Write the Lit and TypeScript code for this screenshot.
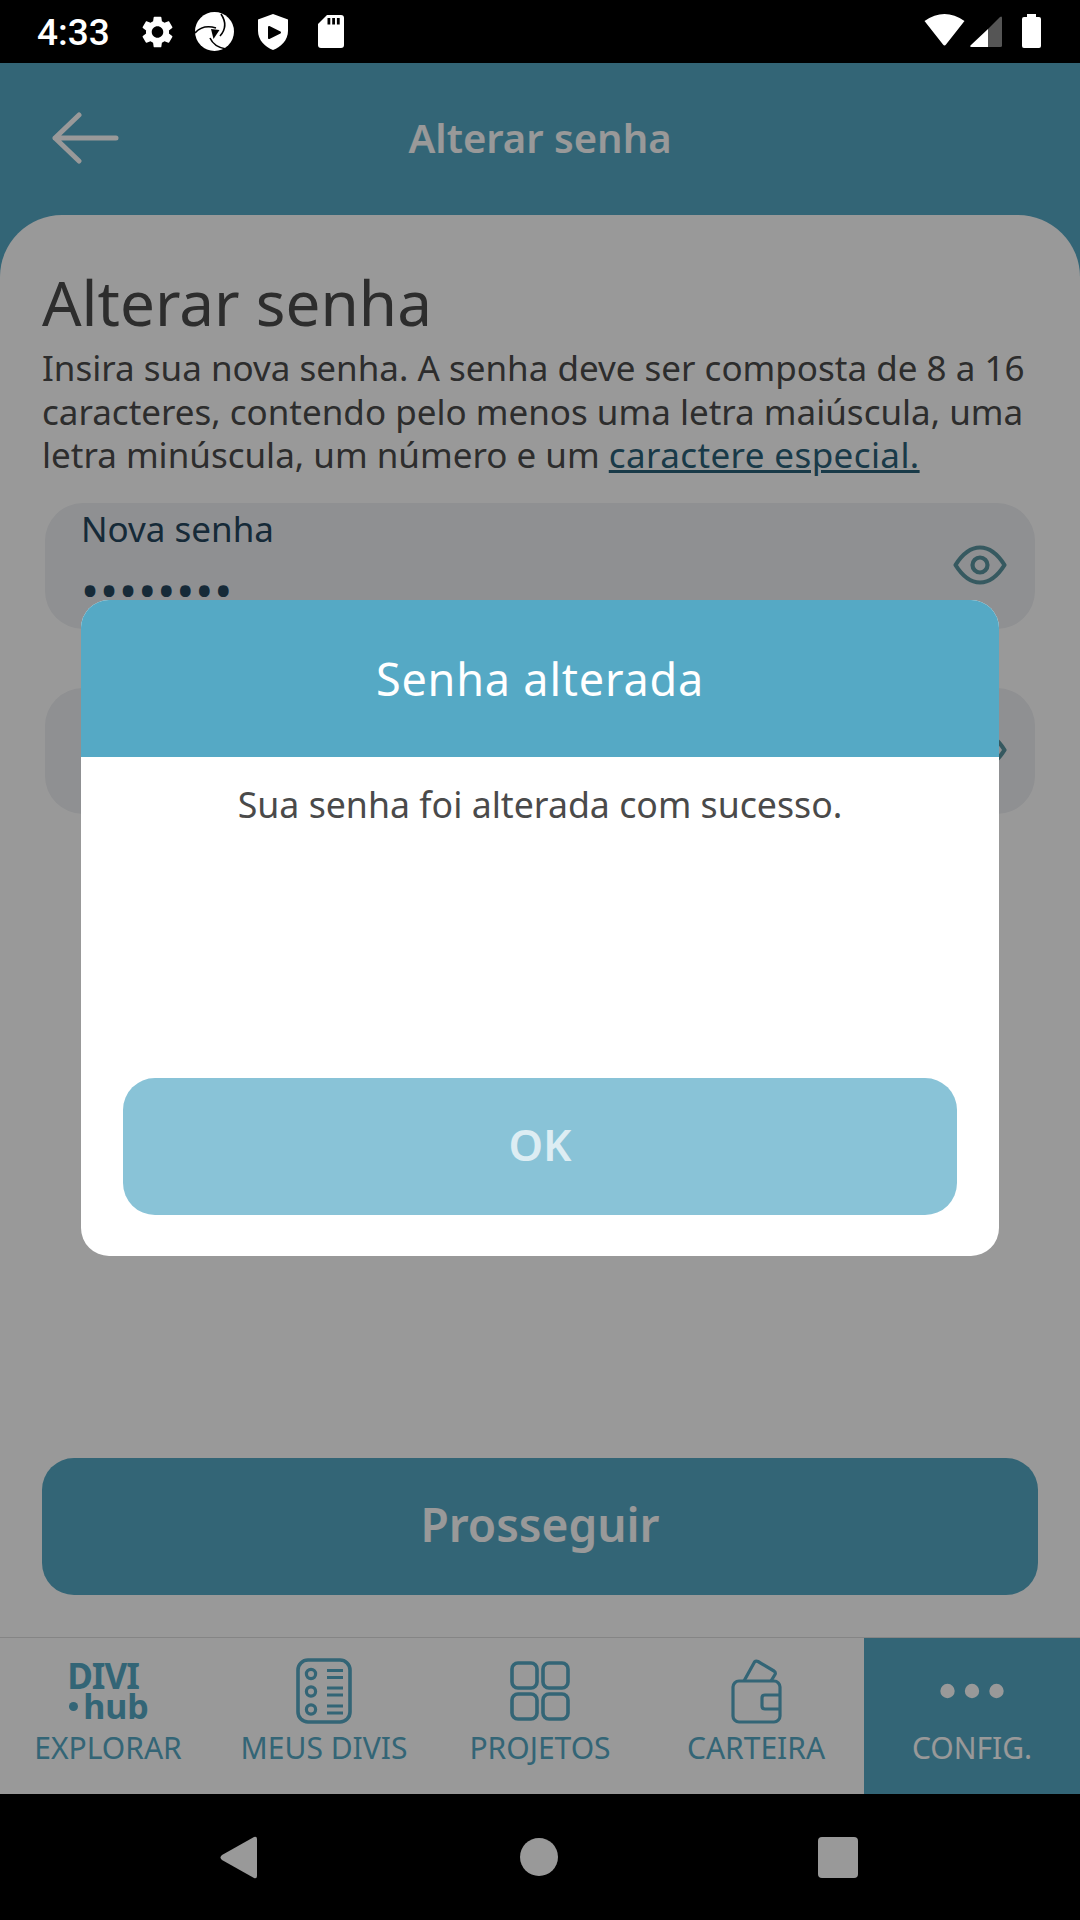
import { LitElement, css, html } from "lit";
import { customElement } from "lit/decorators.js";

const eyeIcon = html`<svg class="eye" viewBox="0 0 54 40" fill="none" stroke="#5a95a0" stroke-width="4.2">
  <path d="M2.5 20 C10 8 18 2.5 27 2.5 C36 2.5 44 8 51.5 20 C44 32 36 37.5 27 37.5 C18 37.5 10 32 2.5 20 Z" stroke-linejoin="round" />
  <circle cx="27" cy="20" r="7.5" />
</svg>`;

const tabs = [
  {
    label: "EXPLORAR",
    icon: html`<div class="logo"><span class="logo-top">DIVI</span><span class="logo-bottom"><i></i>hub</span></div>`,
  },
  {
    label: "MEUS DIVIS",
    icon: html`<svg class="ic-list" viewBox="0 0 56 66" fill="none" stroke="#55a9c5">
      <rect x="2" y="2" width="52" height="62" rx="10" stroke-width="3.6" />
      <g stroke-width="3.2">
        <circle cx="15" cy="16" r="4.6" />
        <circle cx="15" cy="33.5" r="4.6" />
        <circle cx="15" cy="51.5" r="4.6" />
        <path d="M31 12.5H47M31 19.5H47M31 30H47M31 37H47M31 48H47M31 55H47" />
      </g>
    </svg>`,
  },
  {
    label: "PROJETOS",
    icon: html`<svg class="ic-grid" viewBox="0 0 60 60" fill="none" stroke="#55a9c5" stroke-width="3.6">
      <rect x="2" y="2" width="25" height="25" rx="6" />
      <rect x="33" y="2" width="25" height="25" rx="6" />
      <rect x="2" y="33" width="25" height="25" rx="6" />
      <rect x="33" y="33" width="25" height="25" rx="6" />
    </svg>`,
  },
  {
    label: "CARTEIRA",
    icon: html`<svg class="ic-wallet" viewBox="0 0 51 65" fill="none" stroke="#55a9c5" stroke-width="3.2" stroke-linejoin="round">
      <rect x="2" y="22" width="47" height="41" rx="6" />
      <path d="M13 22 L23.5 3 Q25 1.5 27 2.5 L43 12 Q45 13.5 44 15.5 L40 22" />
      <path d="M49 36 H34 Q31 36 31 39 V47 Q31 50 34 50 H49" />
    </svg>`,
  },
  {
    label: "CONFIG.",
    active: true,
    icon: html`<svg class="ic-dots" viewBox="0 0 64 16" fill="#fff">
      <circle cx="7.5" cy="8" r="7.2" />
      <circle cx="32" cy="8" r="7.2" />
      <circle cx="56.5" cy="8" r="7.2" />
    </svg>`,
  },
];

@customElement("app-root")
export class AppRoot extends LitElement {
  static styles = css`
    :host {
      display: block;
      position: relative;
      width: 1080px;
      height: 1920px;
      overflow: hidden;
      font-family: "Noto Sans", "Open Sans", sans-serif;
      background: #000;
    }

    .app {
      display: flex;
      flex-direction: column;
      height: 100%;
    }

    /* status bar stays on top of the scrim */
    .status {
      flex: 0 0 63px;
      position: relative;
      z-index: 2;
      background: #000;
      display: flex;
      align-items: flex-start;
      color: #fff;
    }

    .time {
      margin: 13px 0 0 37px;
      font: 500 37px/40px Roboto, sans-serif;
      width: 71px;
      white-space: nowrap;
    }

    .status svg {
      display: block;
      flex: none;
    }

    .gear { width: 31px; height: 32px; margin: 16px 0 0 34px; }
    .aperture { width: 39px; height: 39px; margin: 12px 0 0 22px; }
    .shield { width: 30px; height: 36px; margin: 14px 0 0 24px; }
    .sd { width: 26px; height: 33px; margin: 15px 0 0 30px; }
    .wifi { width: 41px; height: 32px; margin: 14px 0 0 auto; }
    .signal { width: 32px; height: 31px; margin: 16px 0 0 5px; }
    .battery { width: 19px; height: 34px; margin: 14px 39px 0 20px; }

    .screen {
      flex: 1;
      display: flex;
      flex-direction: column;
      background: #55a9c5;
      min-height: 0;
    }

    .topbar {
      flex: 0 0 152px;
      box-sizing: border-box;
      padding-bottom: 3px;
      display: flex;
      align-items: center;
      justify-content: center;
      position: relative;
      color: #fff;
      font-size: 40px;
      font-weight: 600;
    }

    .back {
      position: absolute;
      left: 52px;
      top: 49px;
      width: 67px;
      height: 52px;
    }

    .sheet {
      flex: 1;
      display: flex;
      flex-direction: column;
      background: #fff;
      border-radius: 62px 62px 0 0;
      padding: 52px 42px 42px;
      color: #4b4b4b;
    }

    .sheet h1 {
      margin: 0;
      font-size: 62px;
      font-weight: 400;
      line-height: 70px;
    }

    .sheet p {
      margin: 9px 0 0;
      font-size: 35px;
      line-height: 43.5px;
    }

    .sheet a {
      color: #2b6179;
      text-decoration: underline;
      letter-spacing: 0.4px;
    }

    .field {
      position: relative;
      box-sizing: border-box;
      height: 126px;
      margin: 0 3px;
      padding: 4px 36px;
      background: #eef0f3;
      border-radius: 38px;
      color: #25465e;
      font-size: 35px;
      line-height: 44px;
    }

    .field + .field {
      margin-top: 59px;
    }

    .form {
      margin-top: 26.5px;
    }

    .dots {
      font-size: 48px;
      letter-spacing: 1px;
      line-height: 30px;
      margin-top: 24px;
      white-space: nowrap;
    }

    .eye {
      position: absolute;
      right: 28px;
      top: 42px;
      width: 54px;
      height: 40px;
    }

    .primary {
      margin-top: auto;
      height: 137px;
      box-sizing: border-box;
      padding-bottom: 5px;
      display: flex;
      align-items: center;
      justify-content: center;
      background: #55a9c5;
      border-radius: 32px;
      color: #fff;
      font-size: 46px;
      font-weight: 600;
    }

    .tabs {
      flex: 0 0 157px;
      display: flex;
      box-sizing: border-box;
      background: #fff;
      border-top: 1px solid #dedede;
    }

    .tab {
      flex: 1;
      display: flex;
      flex-direction: column;
      align-items: center;
      color: #55a9c5;
      font-size: 30px;
    }

    .tab.active {
      background: #55a9c5;
      color: #fff;
    }

    .tab-icon {
      height: 74px;
      margin-top: 16px;
      display: flex;
      align-items: center;
      justify-content: center;
    }

    .tab-label {
      line-height: 40px;
      white-space: nowrap;
    }

    .logo {
      display: flex;
      flex-direction: column;
      font-weight: 700;
      line-height: 30px;
      color: #55a9c5;
    }

    .logo-top {
      font-size: 35px;
      letter-spacing: -1px;
    }

    .logo-bottom {
      display: flex;
      align-items: center;
      gap: 5px;
      margin-left: 2px;
      font-size: 34px;
    }

    .logo-bottom i {
      width: 9px;
      height: 9px;
      border-radius: 50%;
      background: currentColor;
    }

    .ic-list { width: 56px; height: 66px; }
    .ic-grid { width: 60px; height: 60px; }
    .ic-wallet { width: 51px; height: 65px; }
    .ic-dots { width: 64px; height: 16px; }

    .navbar {
      flex: 0 0 126px;
      box-sizing: border-box;
      padding-right: 3px;
      background: #000;
      position: relative;
      display: flex;
      align-items: center;
      justify-content: center;
    }

    .navbar svg {
      display: block;
      flex: none;
    }

    .nav-back { width: 38px; height: 43px; margin-right: 262px; }
    .nav-home { width: 38px; height: 38px; }
    .nav-recent { width: 40px; height: 41px; margin-left: 260px; }

    /* dim layer over everything below the status bar */
    .scrim {
      position: absolute;
      left: 0;
      right: 0;
      top: 63px;
      bottom: 0;
      z-index: 1;
      background: rgba(0, 0, 0, 0.4);
      padding-top: 537px;
      box-sizing: border-box;
    }

    .dialog {
      width: 918px;
      height: 656px;
      margin: 0 auto;
      display: flex;
      flex-direction: column;
      background: #fff;
      border-radius: 28px;
      overflow: hidden;
      box-sizing: border-box;
    }

    .dialog-head {
      flex: 0 0 157px;
      display: flex;
      align-items: center;
      justify-content: center;
      background: #55a9c5;
      color: #fff;
      font-size: 45px;
      letter-spacing: 0.8px;
    }

    .dialog-msg {
      margin-top: 25px;
      text-align: center;
      color: #4a4a4a;
      font-size: 35.7px;
      line-height: 44px;
    }

    .ok {
      margin: auto 42px 41px;
      height: 137px;
      box-sizing: border-box;
      padding-bottom: 5px;
      display: flex;
      align-items: center;
      justify-content: center;
      background: #89c3d7;
      border-radius: 32px;
      color: #ddedf3;
      font-size: 44px;
      font-weight: 600;
    }
  `;

  private renderStatus() {
    return html`<div class="status">
      <span class="time">4:33</span>
      <svg class="gear" viewBox="2.6 2 18.8 20" fill="#fff">
        <path d="M19.14 12.94c.04-.3.06-.61.06-.94 0-.32-.02-.64-.07-.94l2.03-1.58c.18-.14.23-.41.12-.61l-1.92-3.32c-.12-.22-.37-.29-.59-.22l-2.39.96c-.5-.38-1.03-.7-1.62-.94l-.36-2.54c-.04-.24-.24-.41-.48-.41h-3.84c-.24 0-.43.17-.47.41l-.36 2.54c-.59.24-1.13.57-1.62.94l-2.39-.96c-.22-.08-.47 0-.59.22L2.74 8.87c-.12.21-.08.47.12.61l2.03 1.58c-.05.3-.09.63-.09.94s.02.64.07.94l-2.03 1.58c-.18.14-.23.41-.12.61l1.92 3.32c.12.22.37.29.59.22l2.39-.96c.5.38 1.03.7 1.62.94l.36 2.54c.05.24.24.41.48.41h3.84c.24 0 .44-.17.47-.41l.36-2.54c.59-.24 1.13-.56 1.62-.94l2.39.96c.22.08.47 0 .59-.22l1.92-3.32c.12-.22.07-.47-.12-.61l-2.01-1.58zM12 15.6c-1.98 0-3.6-1.62-3.6-3.6s1.62-3.6 3.6-3.6 3.6 1.62 3.6 3.6-1.62 3.6-3.6 3.6z" />
      </svg>
      <svg class="aperture" viewBox="0 0 39 39">
        <circle cx="19.5" cy="19.5" r="19.5" fill="#fff" />
        <g fill="none" stroke="#000" stroke-width="1.6">
          <path d="M0 21 Q8 12 21 16" />
          <path d="M26 2 Q34 14 25 24" />
          <path d="M31 37 Q19 35 15 26" />
        </g>
        <path d="M16 17 L24.5 18 L18.5 27 Z" fill="#000" />
      </svg>
      <svg class="shield" viewBox="0 0 30 36">
        <path d="M15 0 L30 5.5 V17 C30 26 23 33 15 36 C7 33 0 26 0 17 V5.5 Z" fill="#fff" />
        <path d="M11 13 L22 18.5 L11 24 Z" fill="#000" stroke="#000" stroke-width="2" stroke-linejoin="round" />
      </svg>
      <svg class="sd" viewBox="0 0 26 33">
        <path d="M9 0 H23 a3 3 0 0 1 3 3 V30 a3 3 0 0 1 -3 3 H3 a3 3 0 0 1 -3 -3 V9 Z" fill="#fff" />
        <path d="M9.5 3 h2.8 v6.5 h-2.8z M14.2 3 h2.8 v6.5 h-2.8z M18.9 3 h2.8 v6.5 h-2.8z" fill="#000" />
      </svg>
      <svg class="wifi" viewBox="0 0 41 32">
        <path d="M0.5 7 Q20.5 -7 40.5 7 L22 30.5 Q20.5 32.5 19 30.5 Z" fill="#fff" />
      </svg>
      <svg class="signal" viewBox="0 0 32 31">
        <path d="M18 13 L30 1 Q32 -0.5 32 2 V29.5 Q32 31 30.5 31 H18 Z" fill="#555" />
        <path d="M18 13 V31 H1.5 Q-0.5 31 0.5 29.5 Z" fill="#fff" />
      </svg>
      <svg class="battery" viewBox="0 0 19 34">
        <path d="M5 0 H14 V3 H17 Q19 3 19 5 V32 Q19 34 17 34 H2 Q0 34 0 32 V5 Q0 3 2 3 H5 Z" fill="#fff" />
      </svg>
    </div>`;
  }

  private renderTabs() {
    return html`<nav class="tabs">
      ${tabs.map(
        (t) => html`<div class="tab ${t.active ? "active" : ""}">
          <div class="tab-icon">${t.icon}</div>
          <div class="tab-label">${t.label}</div>
        </div>`
      )}
    </nav>`;
  }

  render() {
    return html`<div class="app">
        ${this.renderStatus()}
        <div class="screen">
          <header class="topbar">
            <svg class="back" viewBox="0 0 67 52" fill="none" stroke="#fff" stroke-width="5" stroke-linecap="round" stroke-linejoin="round">
              <path d="M64 26 H3 M27 3 L3 26 L27 49" />
            </svg>
            Alterar senha
          </header>
          <main class="sheet">
            <h1>Alterar senha</h1>
            <p>
              Insira sua nova senha. A senha deve ser composta de 8 a 16 caracteres, contendo pelo menos uma letra
              maiúscula, uma letra minúscula, um número e um <a>caractere especial.</a>
            </p>
            <div class="form">
              <div class="field">
                <div>Nova senha</div>
                <div class="dots">••••••••</div>
                ${eyeIcon}
              </div>
              <div class="field">${eyeIcon}</div>
            </div>
            <div class="primary">Prosseguir</div>
          </main>
          ${this.renderTabs()}
        </div>
        <div class="navbar">
          <svg class="nav-back" viewBox="0 0 38 43">
            <path d="M2 19 L34 1 Q37 0 37 3 V40 Q37 43 34 42 L2 24 Q-1 21.5 2 19 Z" fill="#fff" />
          </svg>
          <svg class="nav-home" viewBox="0 0 38 38"><circle cx="19" cy="19" r="19" fill="#fff" /></svg>
          <svg class="nav-recent" viewBox="0 0 40 41"><rect width="40" height="41" rx="4" fill="#fff" /></svg>
        </div>
      </div>
      <div class="scrim">
        <div class="dialog">
          <div class="dialog-head">Senha alterada</div>
          <div class="dialog-msg">Sua senha foi alterada com sucesso.</div>
          <div class="ok">OK</div>
        </div>
      </div>`;
  }
}
